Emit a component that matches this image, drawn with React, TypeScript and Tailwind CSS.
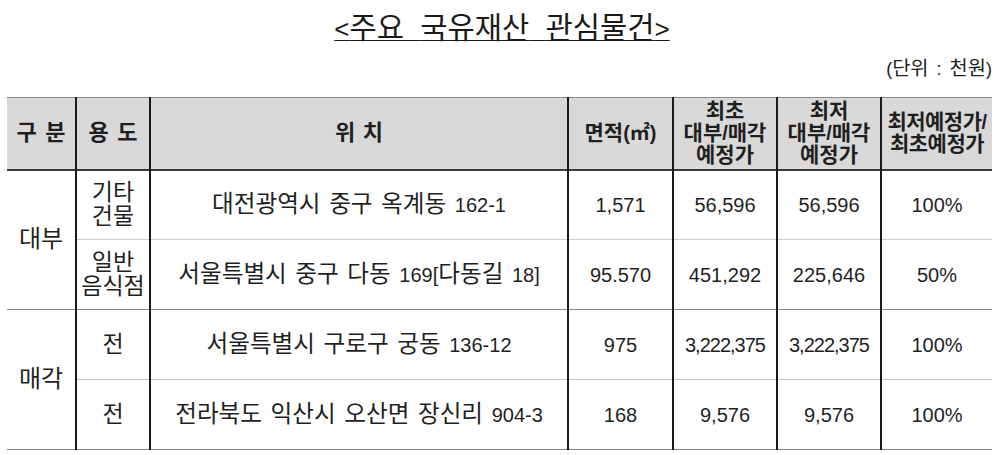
import { Fragment } from 'react'

const font = { fontFamily: '"Liberation Sans", "Noto Sans CJK KR", sans-serif' }

type Row = {
  use: string[]
  location: string
  area: string
  first: string
  lowest: string
  ratio: string
}

const lease: Row[] = [
  { use: ['기타', '건물'], location: '대전광역시 중구 옥계동 162-1', area: '1,571', first: '56,596', lowest: '56,596', ratio: '100%' },
  { use: ['일반', '음식점'], location: '서울특별시 중구 다동 169[다동길 18]', area: '95.570', first: '451,292', lowest: '225,646', ratio: '50%' },
]

const sale: Row[] = [
  { use: ['전'], location: '서울특별시 구로구 궁동 136-12', area: '975', first: '3,222,375', lowest: '3,222,375', ratio: '100%' },
  { use: ['전'], location: '전라북도 익산시 오산면 장신리 904-3', area: '168', first: '9,576', lowest: '9,576', ratio: '100%' },
]

// hangul glyphs in the source doc are wider than the latin digits, so bump them a bit
function K({ text, big = 'text-[1.2em]' }: { text: string; big?: string }) {
  const parts = text.split(/([\uAC00-\uD7A3]+)/)
  return (
    <>
      {parts.map((p, i) =>
        /[\uAC00-\uD7A3]/.test(p) ? (
          <span key={i} className={big}>
            {p}
          </span>
        ) : (
          <Fragment key={i}>{p}</Fragment>
        )
      )}
    </>
  )
}

const cell = 'text-center align-middle border-x-2 border-[#1a1a1a] text-[20px] leading-[22px] text-[#1f1f1f]'
const head = `${cell} font-semibold`

function DataRow({ row, group, sep }: { row: Row; group?: string; sep: string }) {
  return (
    <tr className={`h-[70px] ${sep}`}>
      {group && (
        <td rowSpan={2} className={`${cell} border-l-0 border-b border-b-[#8a8a8a]`}>
          <K text={group} />
        </td>
      )}
      <td className={`${cell} leading-[23px]`}>
        {row.use.map((u) => (
          <div key={u}>
            <K text={u} big="text-[1.15em]" />
          </div>
        ))}
      </td>
      <td className={`${cell} [word-spacing:3px]`}>
        <K text={row.location} big="text-[1.18em]" />
      </td>
      <td className={cell}>{row.area}</td>
      <td className={`${cell} ${row.first.length > 7 ? 'tracking-[-1px]' : ''}`}>{row.first}</td>
      <td className={`${cell} ${row.lowest.length > 7 ? 'tracking-[-1px]' : ''}`}>{row.lowest}</td>
      <td className={`${cell} border-r-0`}>{row.ratio}</td>
    </tr>
  )
}

export default function App() {
  return (
    <div className="w-[1000px] h-[455px] bg-white px-[7px] pt-[12px]" style={font}>
      <h1 className="text-center text-[26px] leading-[32px] text-[#1a1a1a] underline underline-offset-[2px] decoration-1 [word-spacing:9px] pl-[4px]">
        &lt;<K text="주요 국유재산 관심물건" big="text-[1.14em]" />&gt;
      </h1>
      <div className="text-right text-[18px] leading-[24px] text-[#222] mt-[11px] pr-[1px] [word-spacing:3px]">
        (<K text="단위 : 천원" big="text-[1.1em]" />)
      </div>
      <table className="mt-[16px] w-[985px] border-collapse table-fixed">
        <colgroup>
          <col className="w-[69px]" />
          <col className="w-[74px]" />
          <col className="w-[418px]" />
          <col className="w-[105px]" />
          <col className="w-[104px]" />
          <col className="w-[104px]" />
          <col className="w-[111px]" />
        </colgroup>
        <thead>
          <tr className="h-[72px] bg-[#d9d9d9] border-t border-t-[#8a8a8a] border-b-2 border-b-[#3a3a3a]">
            <th className={`${head} border-l-0 [word-spacing:3px]`}>
              <K text="구 분" big="text-[1.1em]" />
            </th>
            <th className={`${head} [word-spacing:3px]`}>
              <K text="용 도" big="text-[1.1em]" />
            </th>
            <th className={`${head} [word-spacing:2px]`}>
              <K text="위 치" big="text-[1.1em]" />
            </th>
            <th className={head}>
              <K text="면적(㎡)" big="text-[1.05em]" />
            </th>
            <th className={`${head} leading-[21px]`}>
              <K text="최초" big="text-[1.05em]" />
              <br />
              <K text="대부/매각" big="text-[1.05em]" />
              <br />
              <K text="예정가" big="text-[1.05em]" />
            </th>
            <th className={`${head} leading-[21px]`}>
              <K text="최저" big="text-[1.05em]" />
              <br />
              <K text="대부/매각" big="text-[1.05em]" />
              <br />
              <K text="예정가" big="text-[1.05em]" />
            </th>
            <th className={`${head} border-r-0 leading-[21px] tracking-[-0.5px]`}>
              <K text="최저예정가/" big="text-[1.05em]" />
              <br />
              <K text="최초예정가" big="text-[1.05em]" />
            </th>
          </tr>
        </thead>
        <tbody>
          <DataRow row={lease[0]} group="대부" sep="border-b border-b-[#cfcfcf]" />
          <DataRow row={lease[1]} sep="border-b border-b-[#8a8a8a]" />
          <DataRow row={sale[0]} group="매각" sep="border-b border-b-[#c4c4c4]" />
          <DataRow row={sale[1]} sep="border-b border-b-[#8a8a8a]" />
        </tbody>
      </table>
    </div>
  )
}
